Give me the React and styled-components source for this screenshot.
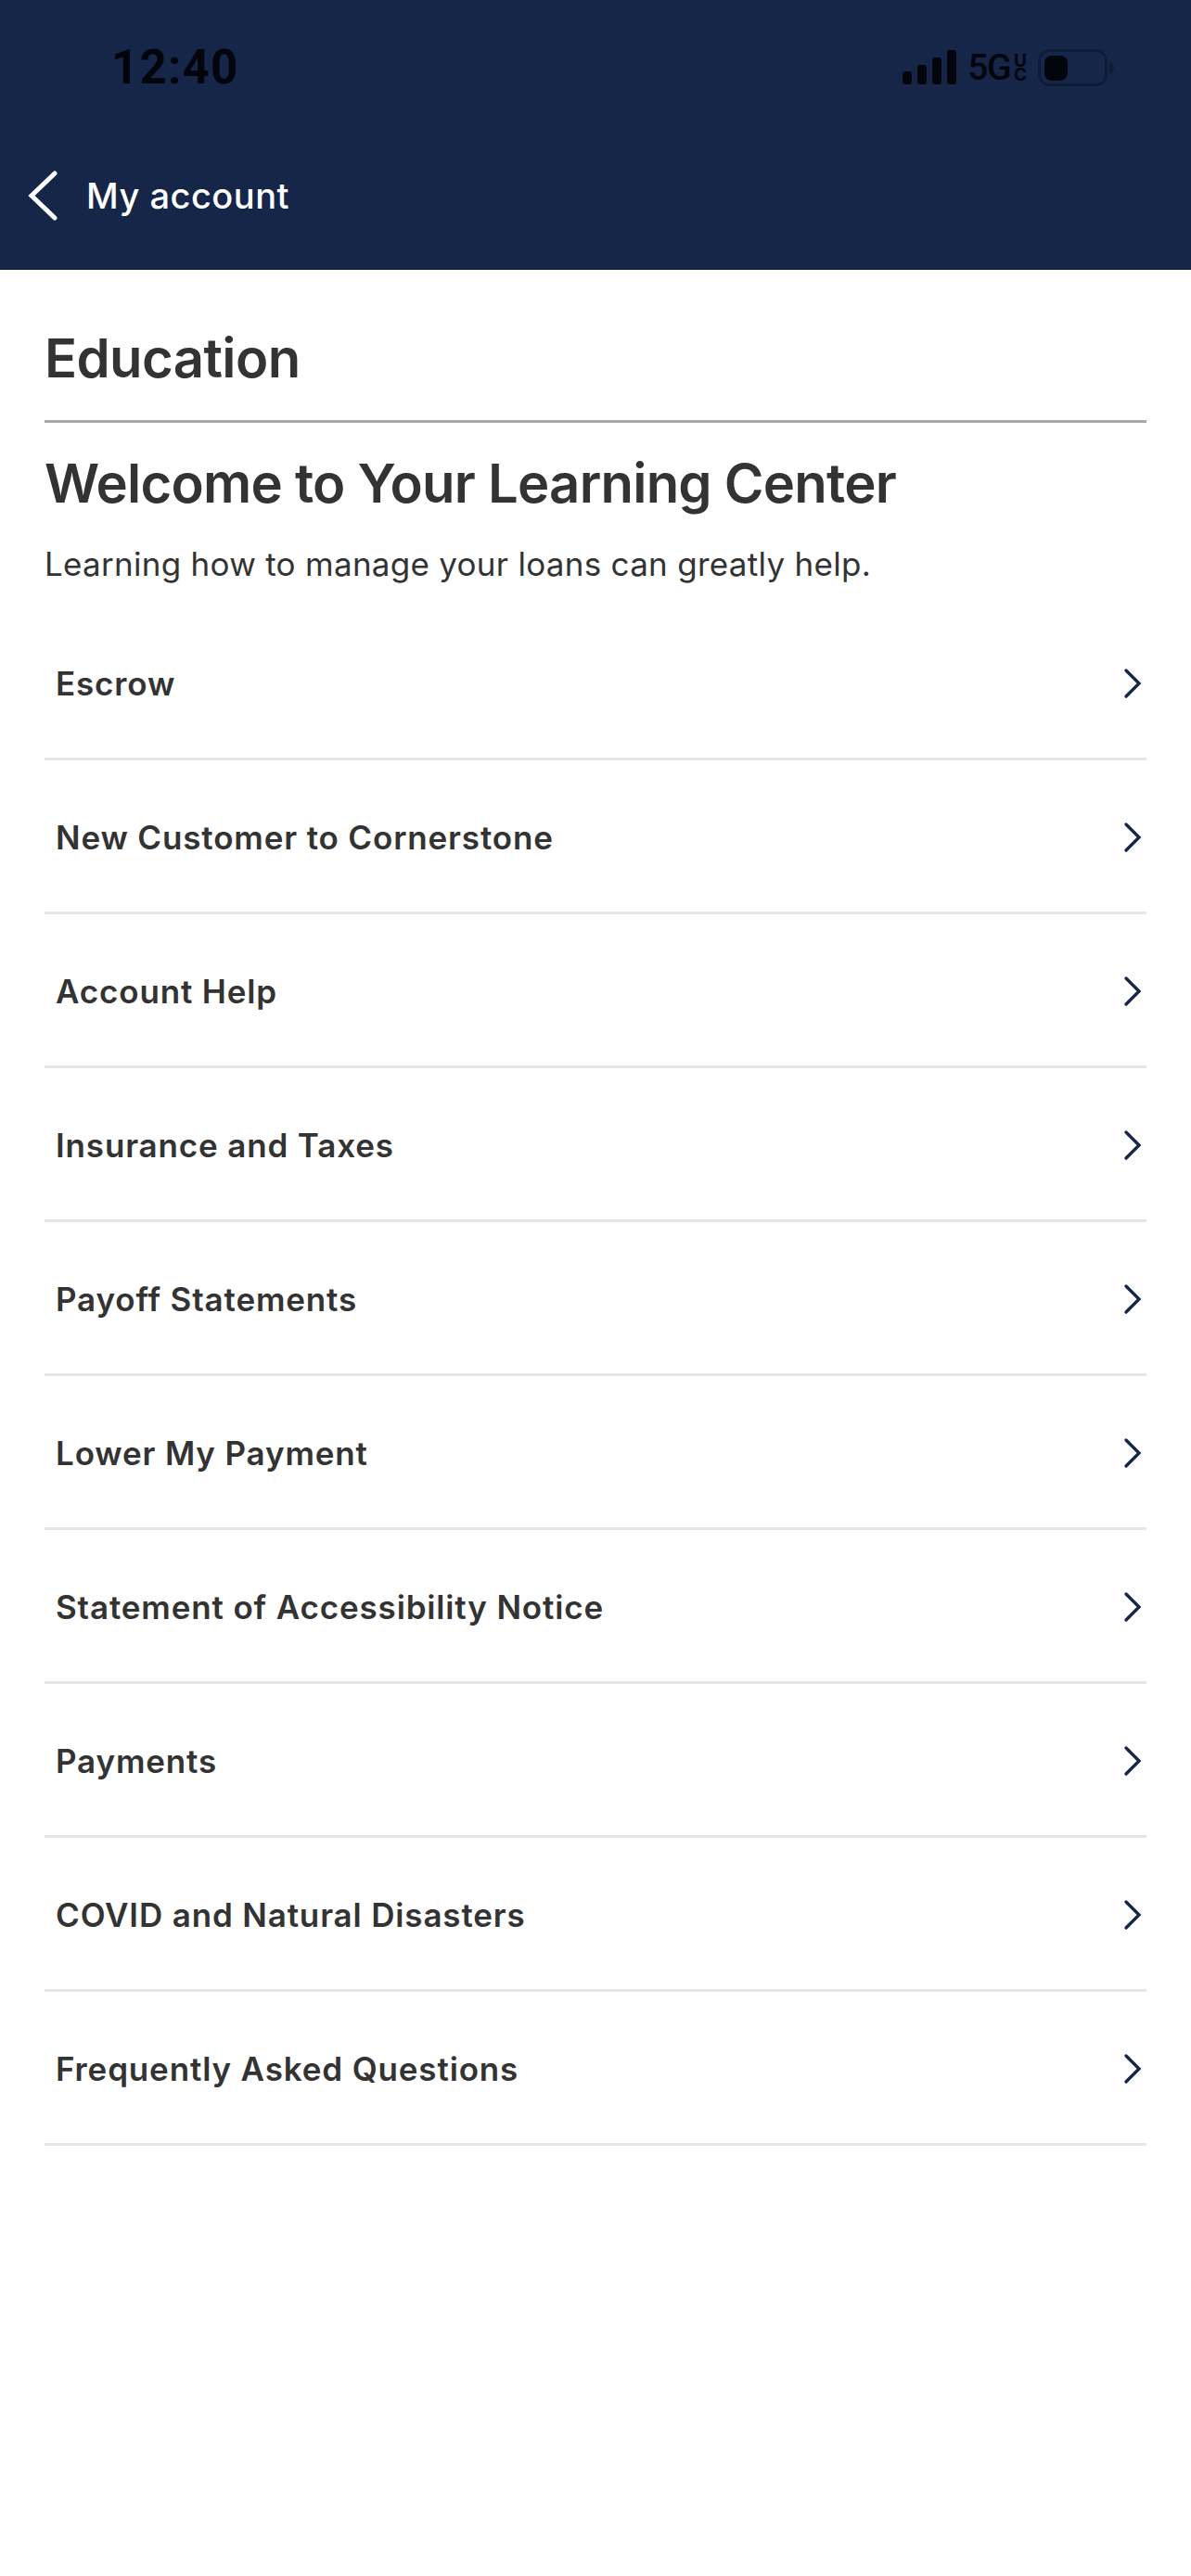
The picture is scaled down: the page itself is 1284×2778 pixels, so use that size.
import React from "react";
import styled, { createGlobalStyle } from "styled-components";

const Global = createGlobalStyle`
  html, body { margin: 0; padding: 0; background: #fff; }
  body { font-family: Inter, "Liberation Sans", sans-serif; }
`;
const Page = styled.div`width: 1284px; height: 2778px; background: #fff; overflow: hidden;`;
const Header = styled.header`height: 291px; background: #152649; display: flex; flex-direction: column;`;
const StatusBar = styled.div`height: 146px; box-sizing: border-box; padding: 45px 82px 0 120px; display: flex; justify-content: space-between; align-items: flex-start;`;
const Time = styled.span`font-family: Roboto, Inter, sans-serif; font-size: 51px; line-height: 56px; font-weight: 700; color: #02050c; letter-spacing: 1.2px;`;
const StatusIcons = styled.div`display: flex; align-items: center; color: #02050c; height: 50px; margin-top: 3px;`;
const NetLabel = styled.span`font-family: Roboto, Inter, sans-serif; font-size: 39px; line-height: 40px; font-weight: 500; margin: 0 3px 0 12px; letter-spacing: -1.5px;`;
const NetSuffix = styled.span`display: block; width: 16px; font-size: 19px; line-height: 15px; font-weight: 700; word-break: break-all; text-align: center; margin-right: 11px;`;
const NavBar = styled.div`display: flex; align-items: center; padding-left: 30px; gap: 31px; height: 130px;`;
const NavTitle = styled.span`font-size: 38px; font-weight: 500; color: #fff; line-height: 46px; letter-spacing: 0.5px;`;
const Content = styled.main`padding: 0 48px;`;
const PageTitle = styled.h1`margin: 0; padding-top: 60px; height: 102px; box-sizing: content-box; font-size: 58px; line-height: 70px; font-weight: 600; color: #333; letter-spacing: -0.6px; border-bottom: 3px solid #a9a9a9;`;
const Headline = styled.h2`margin: 30px 0 0; font-size: 58px; line-height: 70px; font-weight: 600; color: #333; letter-spacing: -0.75px;`;
const Lead = styled.p`margin: 30px 0 0; font-size: 35px; line-height: 44px; font-weight: 400; color: #333; letter-spacing: 0.28px;`;
const Rows = styled.ul`list-style: none; margin: 24px 0 0; padding: 0;`;
const Row = styled.li`height: 166px; box-sizing: border-box; display: flex; align-items: center; justify-content: space-between; padding: 2px 4px 0 12px; border-bottom: 3px solid #e6e6e6;`;
const RowLabel = styled.span`font-size: 35px; font-weight: 600; color: #333; line-height: 44px; letter-spacing: 0.85px;`;

const items = ["Escrow","New Customer to Cornerstone","Account Help","Insurance and Taxes","Payoff Statements","Lower My Payment","Statement of Accessibility Notice","Payments","COVID and Natural Disasters","Frequently Asked Questions"];

const Signal = () => (
  <svg width="58" height="38" viewBox="0 0 58 38" fill="currentColor">
    <rect x="0" y="23" width="10" height="14" rx="3" />
    <rect x="16" y="16" width="10" height="21" rx="3" />
    <rect x="32" y="8" width="10" height="29" rx="3" />
    <rect x="48" y="0" width="10" height="37" rx="3" />
  </svg>
);
const Battery = () => (
  <svg width="83" height="41" viewBox="0 0 83 41">
    <rect x="1.5" y="1.5" width="72" height="37" rx="11" fill="none" stroke="#0f1c38" strokeWidth="3" />
    <rect x="7" y="7" width="25" height="27" rx="8" fill="#02050c" />
    <path d="M77 14 C81 15 82 18 82 20 C82 23 81 25 77 26 Z" fill="#0f1c38" />
  </svg>
);
const BackChevron = () => (
  <svg width="32" height="54" viewBox="0 0 32 54" fill="none" stroke="#fff" strokeWidth="5" strokeLinecap="round" strokeLinejoin="miter">
    <path d="M29 3 L4 27 L29 51" />
  </svg>
);
const RowChevron = () => (
  <svg width="22" height="34" viewBox="0 0 22 34" fill="none" stroke="#152649" strokeWidth="3.4" strokeLinecap="round">
    <path d="M4 3 L18 17 L4 31" />
  </svg>
);

export default function App() {
  return (
    <Page>
      <Global />
      <Header>
        <StatusBar>
          <Time>12:40</Time>
          <StatusIcons>
            <Signal />
            <NetLabel>5G</NetLabel>
            <NetSuffix>UC</NetSuffix>
            <Battery />
          </StatusIcons>
        </StatusBar>
        <NavBar>
          <BackChevron />
          <NavTitle>My account</NavTitle>
        </NavBar>
      </Header>
      <Content>
        <PageTitle>Education</PageTitle>
        <Headline>Welcome to Your Learning Center</Headline>
        <Lead>Learning how to manage your loans can greatly help.</Lead>
        <Rows>
          {items.map((t) => (
            <Row key={t}>
              <RowLabel>{t}</RowLabel>
              <RowChevron />
            </Row>
          ))}
        </Rows>
      </Content>
    </Page>
  );
}
